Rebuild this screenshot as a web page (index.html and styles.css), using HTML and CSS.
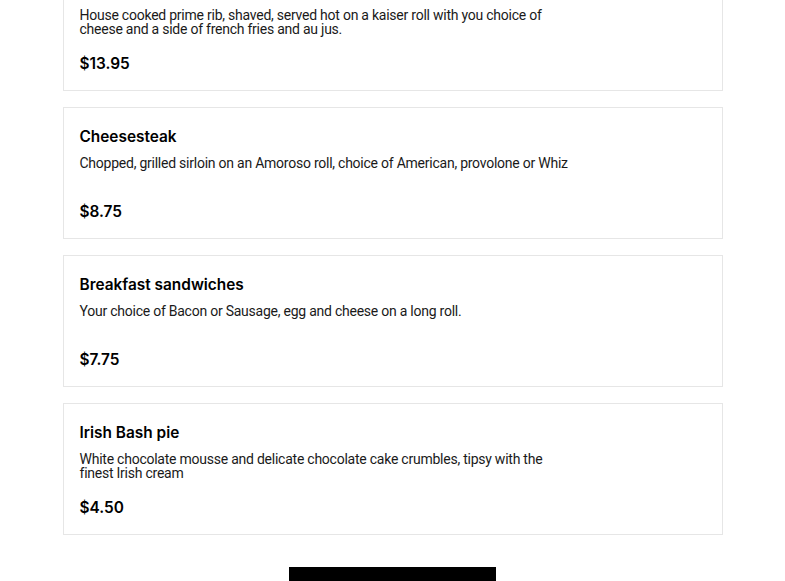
FILE: index.html
```html
<!DOCTYPE html>
<html lang="en">
<head>
    <meta charset="UTF-8">
    <meta name="viewport" content="width=device-width, initial-scale=1.0">
    <title>Menu</title>
    <link rel="stylesheet" href="styles.css">
</head>
<body>
    <div class="menu">
        <div class="item">
            <h3 class="item-name">Prime rib sandwich</h3>
            <p class="item-desc">House cooked prime rib, shaved, served hot on a kaiser roll with you choice of cheese and a side of french fries and au jus.</p>
            <div class="item-price">$13.95</div>
        </div>

        <div class="item">
            <h3 class="item-name">Cheesesteak</h3>
            <p class="item-desc">Chopped, grilled sirloin on an Amoroso roll, choice of American, provolone or Whiz</p>
            <div class="item-price">$8.75</div>
        </div>

        <div class="item">
            <h3 class="item-name">Breakfast sandwiches</h3>
            <p class="item-desc">Your choice of Bacon or Sausage, egg and cheese on a long roll.</p>
            <div class="item-price">$7.75</div>
        </div>

        <div class="item">
            <h3 class="item-name">Irish Bash pie</h3>
            <p class="item-desc">White chocolate mousse and delicate chocolate cake crumbles, tipsy with the finest Irish cream</p>
            <div class="item-price">$4.50</div>
        </div>

        <div class="more">
            <button class="more-button">View full menu</button>
        </div>
    </div>
</body>
</html>
```

FILE: styles.css
```css
body {
    margin: 0;
    font-family: Inter, "Noto Sans", sans-serif;
    color: #000;
    background: #fff;
}
.menu {
    max-width: 660px;
    margin: -41px auto 0;
    display: flex;
    flex-direction: column;
    gap: 16px;
}
.item {
    border: 1px solid #e6e6e6;
    padding: 17px 16px 14px;
}
.item-name {
    margin: 0;
    font-size: 15.4px;
    line-height: 24px;
    font-weight: 600;
}
.item-desc {
    margin: 7px 0 16px;
    max-width: 490px;
    height: 28px;
    font-family: Roboto, sans-serif;
    font-size: 14px;
    line-height: 14px;
    letter-spacing: -0.24px;
    color: #1a1a1a;
}
.item-price {
    font-size: 15.4px;
    line-height: 24px;
    font-weight: 600;
}
.more {
    display: flex;
    justify-content: center;
    padding-top: 16px;
}
.more-button {
    width: 207px;
    height: 48px;
    border: none;
    background: #000;
    color: #fff;
    font-family: Inter, sans-serif;
    font-size: 16px;
    font-weight: 500;
}
```
